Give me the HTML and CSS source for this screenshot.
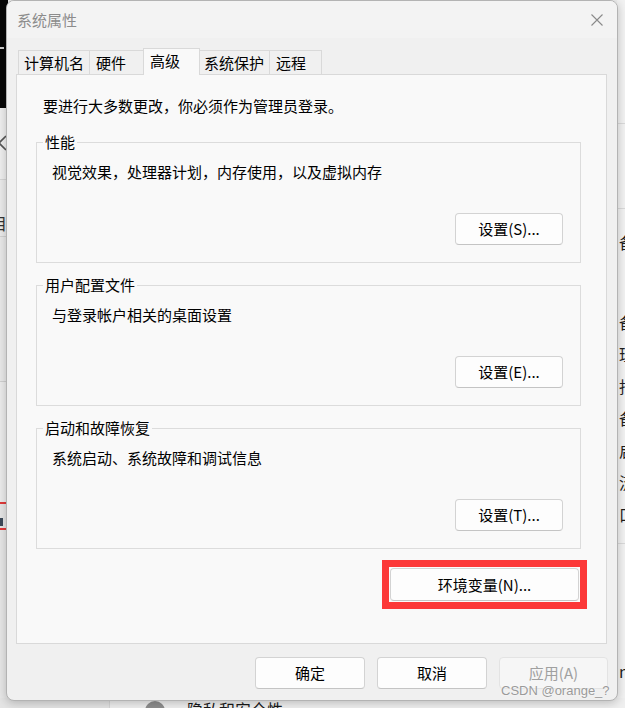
FILE: index.html
```html
<!DOCTYPE html>
<html lang="zh-CN">
<head>
<meta charset="utf-8">
<title>系统属性</title>
<link rel="stylesheet" href="styles.css">
</head>
<body>
<div class="desk-left">
  <div class="dl-dark"><div class="dl-mark"></div></div>
  <div class="dl-a">
    <svg class="dl-chev" width="7" height="16" viewBox="0 0 7 16"><path d="M6 1L-1 8L6 15" fill="none" stroke="#555" stroke-width="1.6"/></svg>
  </div>
  <div class="dl-b"><span class="dl-glyph">目</span></div>
  <div class="dl-c"></div>
  <div class="dl-d"></div>
  <div class="dl-red"></div>
  <div class="dl-e"><div class="dl-bar"></div></div>
  <div class="dl-red"></div>
  <div class="dl-f"></div>
</div>
<div class="desk-right">
  <div class="dr-line dr-l1"></div>
  <div class="dr-line dr-l2"></div>
  <div class="dr-chars dr-c1">备</div>
  <div class="dr-chars dr-c2">备<br>理<br>指<br>备<br>启<br>流<br>口</div>
  <div class="dr-line dr-l3"></div>
  <div class="dr-chars dr-c3">ne</div>
</div>
<div class="desk-bottom">
  <div class="db-left"></div>
  <div class="db-icon"></div>
  <div class="db-text">隐私和安全性</div>
</div>

<div class="dialog">
  <div class="titlebar">
    <span class="title">系统属性</span>
    <svg class="close" width="12" height="12" viewBox="0 0 12 12"><path d="M0.5 0.5L11.5 11.5M11.5 0.5L0.5 11.5" stroke="#8a8a8a" stroke-width="1.1"/></svg>
  </div>
  <div class="dlg-body">
    <div class="tabs">
      <div class="tab t1">计算机名</div>
      <div class="tab t2">硬件</div>
      <div class="tab t3 active">高级</div>
      <div class="tab t4">系统保护</div>
      <div class="tab t5">远程</div>
    </div>
    <div class="panel">
      <p class="note">要进行大多数更改，你必须作为管理员登录。</p>
      <fieldset class="group">
        <legend>性能</legend>
        <p class="desc">视觉效果，处理器计划，内存使用，以及虚拟内存</p>
        <div class="group-actions"><button class="btn btn-set">设置(S)...</button></div>
      </fieldset>
      <fieldset class="group">
        <legend>用户配置文件</legend>
        <p class="desc">与登录帐户相关的桌面设置</p>
        <div class="group-actions"><button class="btn btn-set">设置(E)...</button></div>
      </fieldset>
      <fieldset class="group">
        <legend>启动和故障恢复</legend>
        <p class="desc">系统启动、系统故障和调试信息</p>
        <div class="group-actions"><button class="btn btn-set">设置(T)...</button></div>
      </fieldset>
      <div class="env-row">
        <div class="highlight"><button class="btn btn-env">环境变量(N)...</button></div>
      </div>
    </div>
    <div class="footer">
      <button class="btn btn-foot">确定</button>
      <button class="btn btn-foot">取消</button>
      <button class="btn btn-foot btn-apply" disabled>应用(A)</button>
    </div>
  </div>
</div>
<div class="watermark">CSDN @orange_?</div>
</body>
</html>
```

FILE: styles.css
```css
* { box-sizing: border-box; }
html, body { margin: 0; padding: 0; }
body {
  width: 625px;
  height: 708px;
  overflow: hidden;
  position: relative;
  background: #ededed;
  font-family: "Noto Sans CJK SC", "Microsoft YaHei", sans-serif;
  font-size: 15px;
  color: #000;
}

/* ---------- desktop behind the dialog ---------- */
.desk-left {
  position: absolute;
  left: 0; top: 0;
  width: 8px; height: 708px;
  overflow: hidden;
  background: #e9e9e9;
}
.dl-dark { height: 108px; background: #070707; position: relative; }
.dl-mark { position: absolute; left: 0; top: 47px; width: 4px; height: 2px; background: #cfcfcf; }
.dl-a { height: 72px; background: #efefef; border-bottom: 1px solid #d6d6d6; padding-top: 27px; }
.dl-chev { display: block; }
.dl-b { height: 57px; background: #ebebeb; border-bottom: 1px solid #d2d2d2; overflow: hidden; }
.dl-glyph { display: block; margin: 33px 0 0 -9px; font-size: 16px; line-height: 20px; color: #333; }
.dl-c { height: 145px; background: #e9e9e9; border-bottom: 1px solid #d0d0d0; }
.dl-d { height: 120px; background: #ececec; }
.dl-red { height: 2px; background: #e03a3a; }
.dl-e { height: 24px; background: #e6e6e6; padding-top: 14px; }
.dl-bar { width: 3px; height: 8px; background: #3c4a5a; }
.dl-f { height: 180px; background: #e7e7e7; }

.desk-right {
  position: absolute;
  left: 617px; top: 0;
  width: 8px; height: 708px;
  overflow: hidden;
  background: #f2f2f2;
}
.dr-line { position: absolute; left: 0; right: 0; height: 1px; background: #dadada; }
.dr-l1 { top: 123px; }
.dr-l2 { top: 208px; }
.dr-l3 { top: 543px; }
.dr-chars {
  position: absolute;
  left: 2px;
  font-size: 16px;
  line-height: 32px;
  color: #1e1e1e;
}
.dr-c1 { top: 226px; }
.dr-c2 { top: 306px; }
.dr-c3 { top: 655px; }

.desk-bottom {
  position: absolute;
  left: 0; top: 698px;
  width: 625px; height: 10px;
  overflow: hidden;
  background: #efefef;
}
.db-left { position: absolute; left: 0; top: 0; width: 110px; height: 10px; background: #e4e4e4; border-right: 1px solid #d6d6d6; }
.db-icon { position: absolute; left: 145px; top: 3px; width: 20px; height: 20px; border-radius: 50%; background: #8d8d8d; }
.db-text { position: absolute; left: 187px; top: 1px; font-size: 16px; line-height: 20px; color: #1a1a1a; }

/* ---------- dialog window ---------- */
.dialog {
  position: absolute;
  left: 6px; top: 0;
  width: 612px; height: 701px;
  background: #f0f0f0;
  border: 1px solid #b3b3b3;
  border-radius: 8px;
  box-shadow: 0 2px 10px rgba(0, 0, 0, 0.22);
  overflow: hidden;
}
.titlebar {
  height: 37px;
  display: flex;
  align-items: center;
  justify-content: space-between;
  padding: 0 14px 0 10px;
  background: #f3f3f3;
}
.title { font-size: 15px; line-height: 20px; color: #8c8c8c; }
.close { display: block; margin-top: 1px; }

.dlg-body { padding: 10px 10px 0 9px; }

.tabs {
  display: flex;
  align-items: flex-end;
  height: 26px;
  padding-left: 2px;
  position: relative;
  z-index: 2;
}
.tab {
  height: 24px;
  line-height: 23px;
  padding-left: 5px;
  border: 1px solid #d9d9d9;
  border-bottom: none;
  background: #f0f0f0;
  white-space: nowrap;
  margin-left: -1px;
}
.t1 { width: 72px; margin-left: 0; }
.t2 { width: 55px; padding-left: 6px; }
.t3 { width: 57px; padding-left: 6px; }
.t4 { width: 71px; padding-left: 4px; }
.t5 { width: 53px; padding-left: 6px; }
.tab.active {
  height: 27px;
  margin-bottom: -1px;
  line-height: 24px;
  padding-bottom: 2px;
  background: #f9f9f9;
  position: relative;
  z-index: 1;
}

.panel {
  height: 570px;
  border: 1px solid #d9d9d9;
  background: #f9f9f9;
  padding: 0 25px 0 19px;
  position: relative;
  z-index: 1;
}
.note {
  margin: 21px 0 16px;
  padding-left: 7px;
  line-height: 20px;
}

.group {
  margin: 0;
  min-width: 0;
  border: 1px solid #dcdcdc;
  padding: 0 17px 17px 0;
  height: 131px;
}
.group + .group { margin-top: 12px; }
.group legend {
  margin-left: 6px;
  padding: 0 2px;
  line-height: 20px;
  font-size: 15px;
}
.desc { margin: 10px 0 0 15px; line-height: 20px; }
.group-actions {
  display: flex;
  justify-content: flex-end;
  margin-top: 31px;
}

.btn {
  font-family: "Noto Sans CJK SC", "Microsoft YaHei", sans-serif;
  font-size: 15px;
  color: #000;
  background: #fdfdfd;
  border: 1px solid #d3d3d3;
  border-bottom-color: #c4c4c4;
  border-radius: 4px;
  padding: 0;
  line-height: 20px;
  cursor: default;
}
.btn-set { width: 108px; height: 32px; }

.env-row {
  display: flex;
  justify-content: flex-end;
  margin-top: 19px;
  padding-right: 2px;
}
.highlight {
  border: 7px solid #fc3838;
  padding: 1px;
  margin: -8px -8px -8px 0;
  background: #fbfbfb;
}
.btn-env {
  display: block;
  width: 189px;
  height: 33px;
}

.footer {
  display: flex;
  justify-content: flex-end;
  gap: 12px;
  margin: 13px -1px 0 0;
}
.btn-foot { width: 110px; height: 32px; }
.btn-apply {
  width: 109px;
  background: #f6f6f6;
  border-color: #e3e3e3;
  color: #a0a0a0;
}

.watermark {
  position: absolute;
  left: 501px;
  top: 682px;
  font-family: "Liberation Sans", Arial, sans-serif;
  font-size: 13px;
  line-height: 17px;
  color: #9a9a9a;
  text-shadow: 0 0 2px #fff;
  white-space: nowrap;
}
```
